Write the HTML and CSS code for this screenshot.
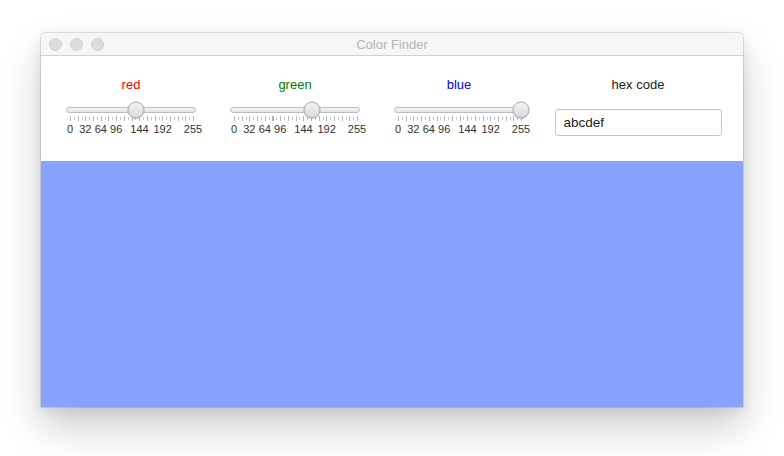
FILE: index.html
```html
<!DOCTYPE html>
<html lang="en">

<head>
  <meta charset="UTF-8">
  <title>Color Finder</title>
  <meta name="viewport" content="width=device-width, initial-scale=1.0">
  <link rel="stylesheet" href="styles.css">
</head>

<body>

  <div class="window">
    <div class="titlebar">
      <div class="lights">
        <span class="light"></span>
        <span class="light"></span>
        <span class="light"></span>
      </div>
      <div class="title">Color Finder</div>
    </div>

    <div class="controls">
      <div class="channel">
        <div class="label red">red</div>
        <div class="slider">
          <div class="track"></div>
          <div class="rail"><span class="thumb" style="left: 53.3%"></span></div>
        </div>
        <div class="ticks"></div>
        <div class="scale">
          <span style="left: 0%">0</span>
          <span style="left: 12.5%">32</span>
          <span style="left: 25.1%">64</span>
          <span style="left: 37.6%">96</span>
          <span style="left: 56.5%">144</span>
          <span style="left: 75.3%">192</span>
          <span style="left: 100%">255</span>
        </div>
      </div>

      <div class="channel">
        <div class="label green">green</div>
        <div class="slider">
          <div class="track"></div>
          <div class="rail"><span class="thumb" style="left: 63.5%"></span></div>
        </div>
        <div class="ticks"></div>
        <div class="scale">
          <span style="left: 0%">0</span>
          <span style="left: 12.5%">32</span>
          <span style="left: 25.1%">64</span>
          <span style="left: 37.6%">96</span>
          <span style="left: 56.5%">144</span>
          <span style="left: 75.3%">192</span>
          <span style="left: 100%">255</span>
        </div>
      </div>

      <div class="channel">
        <div class="label blue">blue</div>
        <div class="slider">
          <div class="track"></div>
          <div class="rail"><span class="thumb" style="left: 100%"></span></div>
        </div>
        <div class="ticks"></div>
        <div class="scale">
          <span style="left: 0%">0</span>
          <span style="left: 12.5%">32</span>
          <span style="left: 25.1%">64</span>
          <span style="left: 37.6%">96</span>
          <span style="left: 56.5%">144</span>
          <span style="left: 75.3%">192</span>
          <span style="left: 100%">255</span>
        </div>
      </div>

      <div class="hex">
        <div class="label">hex code</div>
        <input class="hex-input" type="text" value="abcdef">
      </div>
    </div>

    <div class="swatch"></div>
  </div>

</body>

</html>
```

FILE: styles.css
```css
body {
  margin: 0;
  background: #fff;
  font-family: "Liberation Sans", Arial, sans-serif;
  height: 456px;
  overflow: hidden;
}

.window {
  margin: 33px 0 0 41px;
  width: 702px;
  height: 374px;
  display: flex;
  flex-direction: column;
  border-radius: 5px 5px 0 0;
  overflow: hidden;
  box-shadow: 0 0 0 1px rgba(0, 0, 0, 0.1),
    0 20px 40px rgba(0, 0, 0, 0.2),
    0 4px 12px rgba(0, 0, 0, 0.08);
}

/* 标题栏 */
.titlebar {
  position: relative;
  height: 22px;
  background: #f6f6f6;
  border-bottom: 1px solid #d1d1d1;
  display: flex;
  align-items: center;
  justify-content: center;
}

.lights {
  position: absolute;
  left: 8px;
  top: 5px;
  display: flex;
  gap: 8px;
}

.light {
  width: 11px;
  height: 11px;
  border-radius: 50%;
  background: #dddddd;
  border: 0.5px solid #d0d0d0;
}

.title {
  font-size: 13px;
  color: #b4b4b4;
}

/* 控件区 */
.controls {
  height: 105px;
  background: #fff;
  display: flex;
  padding: 0 8px;
}

.channel {
  width: 164px;
  display: flex;
  flex-direction: column;
  align-items: center;
  padding-top: 21px;
  box-sizing: border-box;
}

.label {
  font-size: 13px;
  line-height: 16px;
  color: #222;
}

.label.red {
  color: #ff0000;
}

.label.green {
  color: #008000;
}

.label.blue {
  color: #0000ff;
}

.slider {
  position: relative;
  width: 130px;
  height: 8px;
  margin-top: 13px;
}

.track {
  height: 6px;
  margin-top: 1px;
  border: 1px solid #bdbdbd;
  border-radius: 4px;
  background: linear-gradient(#f4f4f4, #e6e6e6);
  box-sizing: border-box;
}

.rail {
  position: absolute;
  left: 4px;
  right: 3px;
  top: 4px;
}

.thumb {
  position: absolute;
  top: 0;
  width: 17px;
  height: 17px;
  border-radius: 50%;
  transform: translate(-50%, -50%);
  background: linear-gradient(#f2f2f2, #d9d9d9);
  border: 1px solid #a9a9a9;
  box-sizing: border-box;
  box-shadow: 0 1px 1px rgba(0, 0, 0, 0.12);
}

/* 刻度 */
.ticks {
  width: 124px;
  height: 5px;
  margin: 2px 0 0 2px;
  background:
    repeating-linear-gradient(to right, #b5b5b5 0 1px, transparent 1px 7.7px) 0 0 / 100% 5px no-repeat,
    repeating-linear-gradient(to right, #c8c8c8 0 1px, transparent 1px 3.85px) 0 1px / 100% 3px no-repeat;
}

.scale {
  position: relative;
  width: 123px;
  height: 13px;
  margin: 2px 0 0 1px;
  font-size: 11px;
  line-height: 13px;
  color: #333;
}

.scale span {
  position: absolute;
  top: 0;
  transform: translateX(-50%);
}

/* 十六进制输入 */
.hex {
  flex: 1;
  display: flex;
  flex-direction: column;
  align-items: center;
  padding-top: 21px;
}

.hex-input {
  margin-top: 16px;
  width: 167px;
  height: 27px;
  box-sizing: border-box;
  border: 1px solid #c8c8c8;
  border-radius: 3px;
  padding: 0 8px;
  font-family: "Liberation Sans", Arial, sans-serif;
  font-size: 13.5px;
  color: #222;
  box-shadow: inset 0 1px 1px rgba(0, 0, 0, 0.05);
  outline: none;
}

.swatch {
  flex: 1;
  background: #88a2ff;
}
```
